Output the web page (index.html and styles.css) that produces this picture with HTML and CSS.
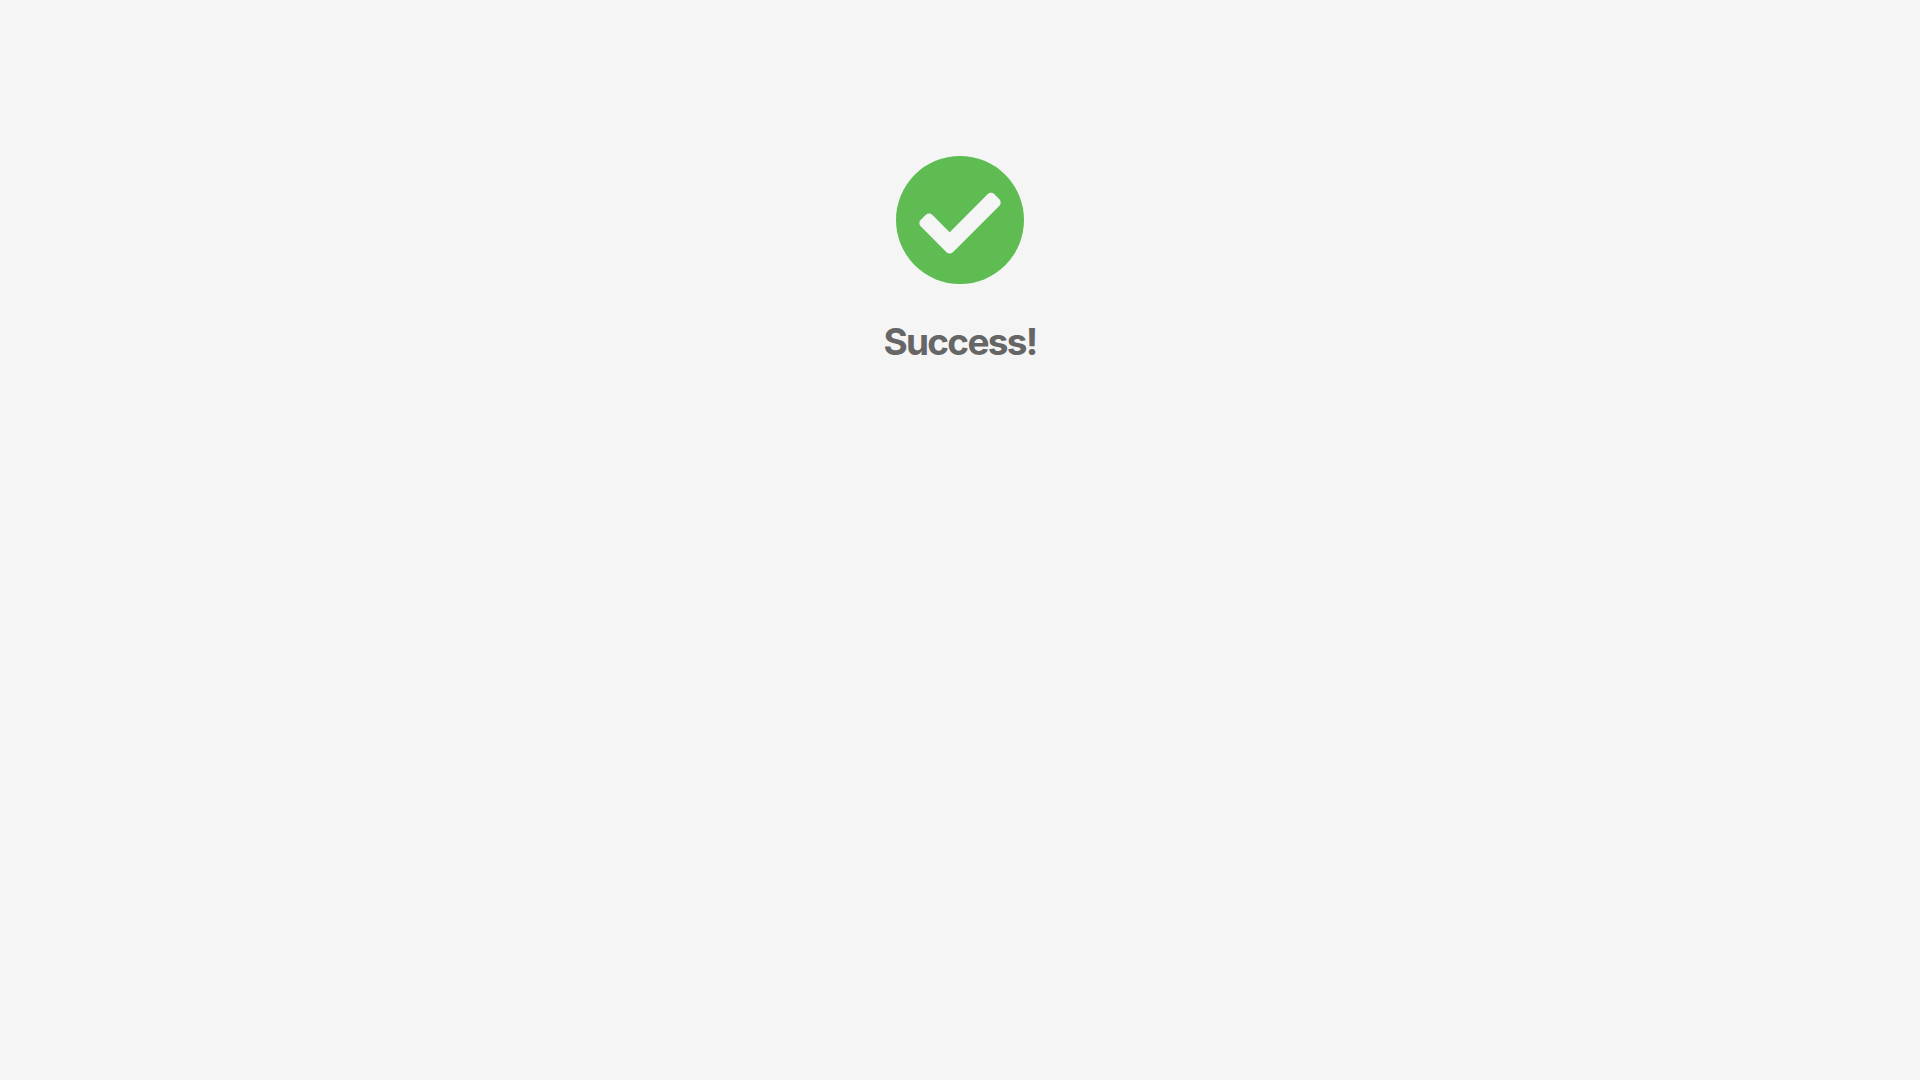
FILE: index.html
```html
<!DOCTYPE html>
<html lang="en">

<head>
    <meta charset="UTF-8">
    <meta name="viewport" content="width=device-width, initial-scale=1.0">
    <title>Success</title>
    <link rel="stylesheet" href="styles.css">
</head>

<body>
    <div class="result">
        <svg class="result-icon" viewBox="0 0 128 128" aria-hidden="true">
            <circle cx="64" cy="64" r="64" fill="#5fbc53" />
            <path d="M33 61.9 53.7 82.6 95 41.3 100.2 46.5 53.7 93 27.8 67.1Z" fill="#f5f5f5" stroke="#f5f5f5" stroke-width="9" stroke-linejoin="round" />
        </svg>
        <h1 class="result-title">Success!</h1>
    </div>
</body>

</html>
```

FILE: styles.css
```css
* {
    box-sizing: border-box;
}

html,
body {
    height: 100%;
}

body {
    margin: 0;
    background-color: #f5f5f5;
    font-family: Inter, "Liberation Sans", sans-serif;
}

.result {
    display: flex;
    flex-direction: column;
    align-items: center;
    padding-top: 156px;
}

.result-icon {
    display: block;
    width: 128px;
    height: 128px;
}

.result-title {
    margin: 36px 0 0;
    color: #666;
    font-size: 37px;
    font-weight: 700;
    line-height: 44px;
    letter-spacing: -1.7px;
}
```
